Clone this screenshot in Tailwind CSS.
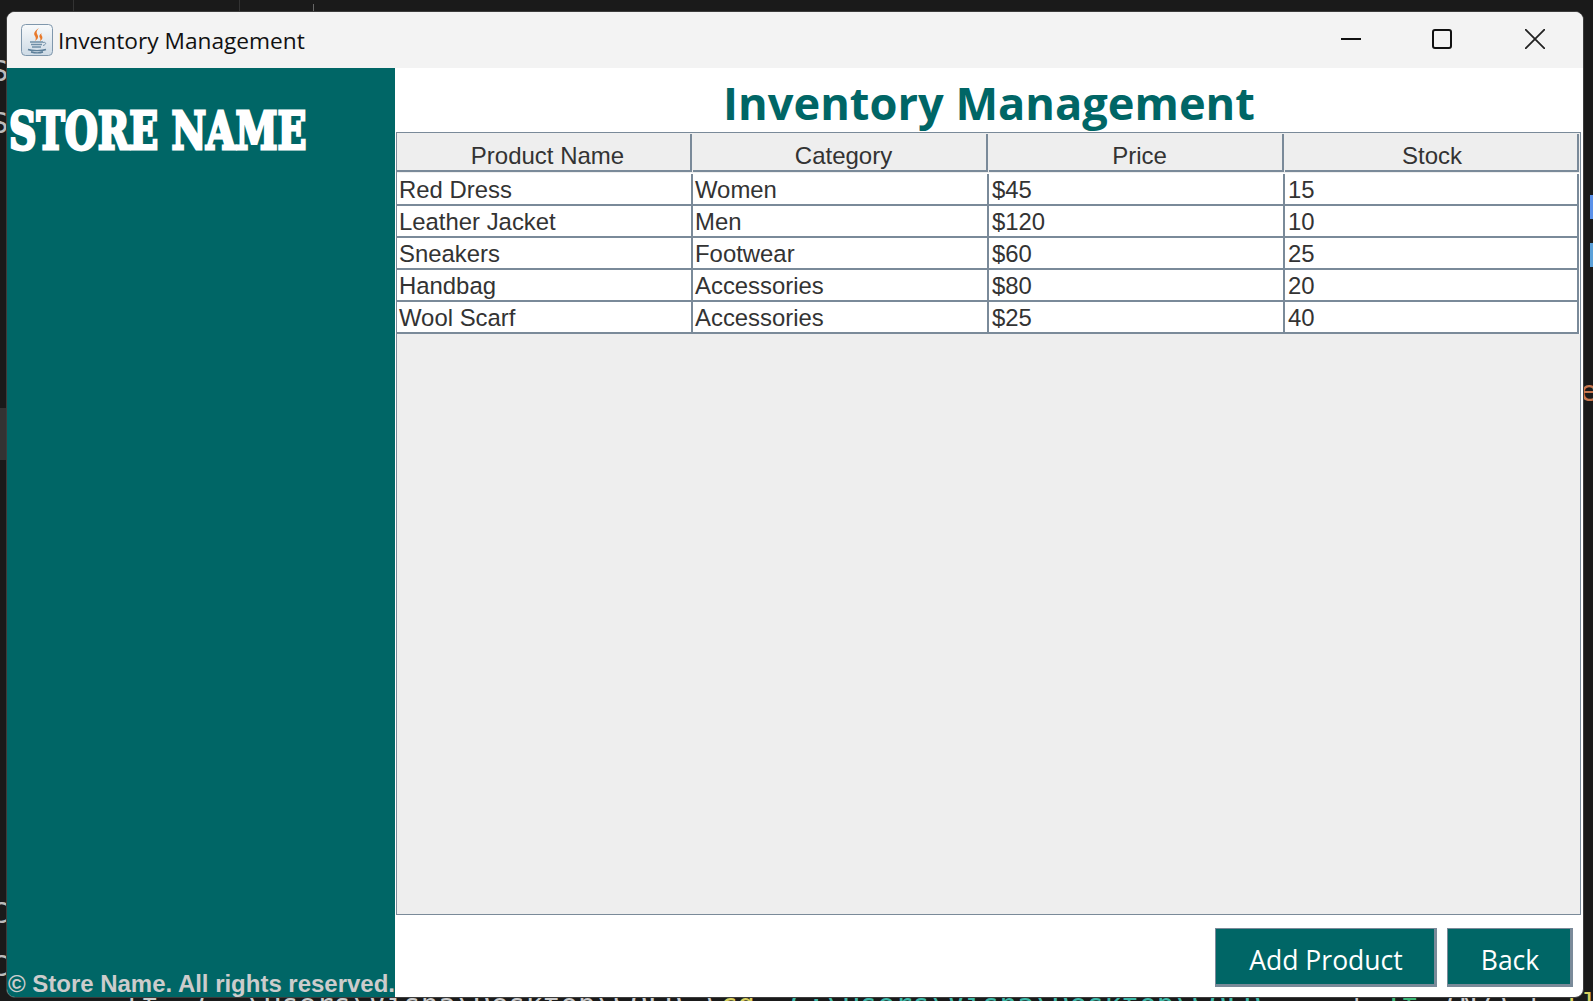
<!doctype html>
<html><head><meta charset="utf-8"><script src="https://cdn.jsdelivr.net/npm/@tailwindcss/browser@4"></script></head>
<body class="relative w-[1593px] h-[1001px] overflow-hidden bg-[#1a1a1a] font-['Liberation_Sans',sans-serif]">
<!-- desktop behind the window -->
<div class="absolute left-[73px] top-0 w-px h-[12px] bg-[#333]"></div>
<div class="absolute left-[239px] top-0 w-px h-[12px] bg-[#333]"></div>
<div class="absolute left-[313px] top-[4px] w-px h-[8px] bg-[#666]"></div>
<span class="absolute left-[-9px] top-[53px] leading-[36px] text-[#bbb] text-[29px] font-['DejaVu_Sans_Mono',monospace]">S</span>
<span class="absolute left-[-9px] top-[105px] leading-[36px] text-[#bbb] text-[29px] font-['DejaVu_Sans_Mono',monospace]">S</span>
<span class="absolute left-[-9px] top-[895px] leading-[36px] text-[#bbb] text-[29px] font-['DejaVu_Sans_Mono',monospace]">C</span>
<span class="absolute left-[-9px] top-[948px] leading-[36px] text-[#bbb] text-[29px] font-['DejaVu_Sans_Mono',monospace]">C</span>
<span class="absolute left-[124px] top-[986px] leading-[36px] whitespace-pre text-[#ccc] text-[29px] font-['DejaVu_Sans_Mono',monospace]">lt  ( .\Users\Visha\Desktop\SOLD )</span>
<span class="absolute left-[720px] top-[986px] leading-[36px] whitespace-pre text-[#d8d060] text-[29px] font-['DejaVu_Sans_Mono',monospace]">cd</span>
<span class="absolute left-[790px] top-[986px] leading-[36px] whitespace-pre text-[#3cb8a8] text-[29px] font-['DejaVu_Sans_Mono',monospace]">C:\Users\Visha\Desktop\SOLD</span>
<span class="absolute left-[1348px] top-[986px] leading-[36px] whitespace-pre text-[#ccc] text-[29px] font-['DejaVu_Sans_Mono',monospace]">|</span>
<span class="absolute left-[1384px] top-[986px] leading-[36px] whitespace-pre text-[#3cb878] text-[29px] font-['DejaVu_Sans_Mono',monospace]">1t</span>
<span class="absolute left-[1442px] top-[986px] leading-[36px] whitespace-pre text-[#ccc] text-[29px] font-['DejaVu_Sans_Mono',monospace]">(N/)</span>
<span class="absolute left-[1525px] top-[986px] leading-[36px] whitespace-pre text-[#ccc] text-[29px] font-['DejaVu_Sans_Mono',monospace]">|</span>
<span class="absolute left-[1562px] top-[986px] leading-[36px] whitespace-pre text-[#d8d060] text-[29px] font-['DejaVu_Sans_Mono',monospace]">]]</span>
<div class="absolute left-[1590px] top-[195px] w-[3px] h-[24px] bg-[#5a90e8]"></div>
<div class="absolute left-[1590px] top-[243px] w-[3px] h-[24px] bg-[#5aa0d8]"></div>
<span class="absolute left-[1580px] top-[373px] leading-[36px] text-[#c87850] text-[29px] font-['DejaVu_Sans_Mono',monospace]">e</span>
<div class="absolute left-0 top-[408px] w-[7px] h-[52px] bg-[#333]"></div>

<!-- window -->
<div class="absolute left-[6px] top-[11px] w-[1578px] h-[987px] rounded-[9px] border border-[#3c3c3c] overflow-hidden flex flex-col bg-white">
  <div class="h-[56px] shrink-0 bg-[#f3f3f3] flex items-center">
    <svg class="ml-[14px] shrink-0" width="32" height="32" viewBox="0 0 32 32">
      <defs><linearGradient id="g" x1="0" y1="0" x2="0" y2="1"><stop offset="0" stop-color="#f8fafb"/><stop offset="1" stop-color="#cddae5"/></linearGradient></defs>
      <rect x=".5" y=".5" width="31" height="31" rx="4" fill="url(#g)" stroke="#7f97ac"/>
      <path d="M18 4c-4 3-6 5-4 8 1 2 1 3 0 5 3-2 4-4 2-7-1-2 0-4 2-6zM21 9c-3 2-3 3-2 5 1 1 0 2 0 3 2-1 3-3 2-5-1-1-1-2 0-3z" fill="#e8792a"/>
      <path d="M9 18h13M10 20.500h11M11 23h9" fill="none" stroke="#6f8ea6" stroke-width="1.400"/>
      <path d="M22 18.500c3-1 4 2 0 3" fill="none" stroke="#6f8ea6" stroke-width="1"/>
      <path d="M7 25.500c4 1.500 14 1.500 18 0M10 28c4 1 9 1 12 0" fill="none" stroke="#5d7f99" stroke-width="1.400"/>
    </svg>
    <span class="ml-[5px] mt-[2px] text-[22.700px] text-[#111] font-['Open_Sans',sans-serif] leading-none">Inventory Management</span>
    <div class="ml-auto flex items-center h-full -mt-[2px]">
      <svg class="mr-[71px]" width="20" height="20" viewBox="0 0 20 20"><path d="M0 10h20" stroke="#111" stroke-width="2"/></svg>
      <svg class="mr-[73px]" width="20" height="20" viewBox="0 0 20 20"><rect x="1" y="1" width="18" height="18" rx="2" fill="none" stroke="#111" stroke-width="2"/></svg>
      <svg class="mr-[38px]" width="20" height="20" viewBox="0 0 20 20"><path d="M0 0l20 20M20 0L0 20" stroke="#222" stroke-width="1.800"/></svg>
    </div>
  </div>
  <div class="flex-1 flex min-h-0">
    <aside class="w-[388px] shrink-0 bg-[#006666] flex flex-col justify-between">
      <div class="mt-[33px] ml-[2px] text-[52px] leading-[60px] whitespace-nowrap text-white font-bold font-['DejaVu_Serif',serif] [-webkit-text-stroke:3px_white] origin-left scale-x-[0.73]">STORE NAME</div>
      <div class="text-[24px] leading-[28px] -mb-[1px] ml-px font-bold text-[#cccccc] whitespace-nowrap tracking-[-0.02px]">© Store Name. All rights reserved.</div>
    </aside>
    <main class="flex-1 min-w-0 flex flex-col">
      <h1 class="h-[64px] pt-[5px] shrink-0 flex items-center justify-center text-[45.200px] font-bold text-[#006666] font-['Open_Sans',sans-serif] leading-none">Inventory Management</h1>
      <div class="h-[783px] shrink-0 ml-px mr-[2px] border border-[#7a8a99] bg-[#eeeeee]">
        <div class="grid grid-cols-[296px_296px_296px_294px] grid-rows-[38px] text-[24px] text-[#333333] text-center mt-px">
          <div class="bg-[#eeeeee] border-r-2 border-b-2 border-[#7a8a99] mr-px pl-[8px] pt-[4px]">Product Name</div>
          <div class="bg-[#eeeeee] border-r-2 border-b-2 border-[#7a8a99] mr-px pl-[8px] pt-[4px]">Category</div>
          <div class="bg-[#eeeeee] border-r-2 border-b-2 border-[#7a8a99] mr-px pl-[8px] pt-[4px]">Price</div>
          <div class="bg-[#eeeeee] border-r-2 border-b-2 border-[#7a8a99] pl-[2px] pt-[4px]">Stock</div>
        </div>
        <div class="grid grid-cols-[296px_296px_296px_294px] auto-rows-[32px] text-[23.900px] text-[#333333] leading-[32px] bg-white pt-px mt-px">
          <div class="pl-[2px] border-r-2 border-b-2 border-[#7a8a99]">Red Dress</div><div class="pl-[2px] border-r-2 border-b-2 border-[#7a8a99]">Women</div><div class="pl-[3px] border-r-2 border-b-2 border-[#7a8a99]">$45</div><div class="pl-[3px] border-r-2 border-b-2 border-[#7a8a99]">15</div>
          <div class="pl-[2px] border-r-2 border-b-2 border-[#7a8a99]">Leather Jacket</div><div class="pl-[2px] border-r-2 border-b-2 border-[#7a8a99]">Men</div><div class="pl-[3px] border-r-2 border-b-2 border-[#7a8a99]">$120</div><div class="pl-[3px] border-r-2 border-b-2 border-[#7a8a99]">10</div>
          <div class="pl-[2px] border-r-2 border-b-2 border-[#7a8a99]">Sneakers</div><div class="pl-[2px] border-r-2 border-b-2 border-[#7a8a99]">Footwear</div><div class="pl-[3px] border-r-2 border-b-2 border-[#7a8a99]">$60</div><div class="pl-[3px] border-r-2 border-b-2 border-[#7a8a99]">25</div>
          <div class="pl-[2px] border-r-2 border-b-2 border-[#7a8a99]">Handbag</div><div class="pl-[2px] border-r-2 border-b-2 border-[#7a8a99]">Accessories</div><div class="pl-[3px] border-r-2 border-b-2 border-[#7a8a99]">$80</div><div class="pl-[3px] border-r-2 border-b-2 border-[#7a8a99]">20</div>
          <div class="pl-[2px] border-r-2 border-b-2 border-[#7a8a99]">Wool Scarf</div><div class="pl-[2px] border-r-2 border-b-2 border-[#7a8a99]">Accessories</div><div class="pl-[3px] border-r-2 border-b-2 border-[#7a8a99]">$25</div><div class="pl-[3px] border-r-2 border-b-2 border-[#7a8a99]">40</div>
        </div>
      </div>
      <div class="flex-1 flex justify-end items-start gap-[10px] pt-[13px] pr-[10px] font-['Open_Sans',sans-serif] text-[26.500px] text-white">
        <button class="w-[222px] h-[59px] pt-[9px] pl-[2px] bg-[#006666] border border-b-[3px] border-r-[3px] border-[#7a8a99]">Add Product</button>
        <button class="w-[126px] h-[59px] pt-[9px] pl-[2px] bg-[#006666] border border-b-[3px] border-r-[3px] border-[#7a8a99]">Back</button>
      </div>
    </main>
  </div>
</div>
</body></html>
